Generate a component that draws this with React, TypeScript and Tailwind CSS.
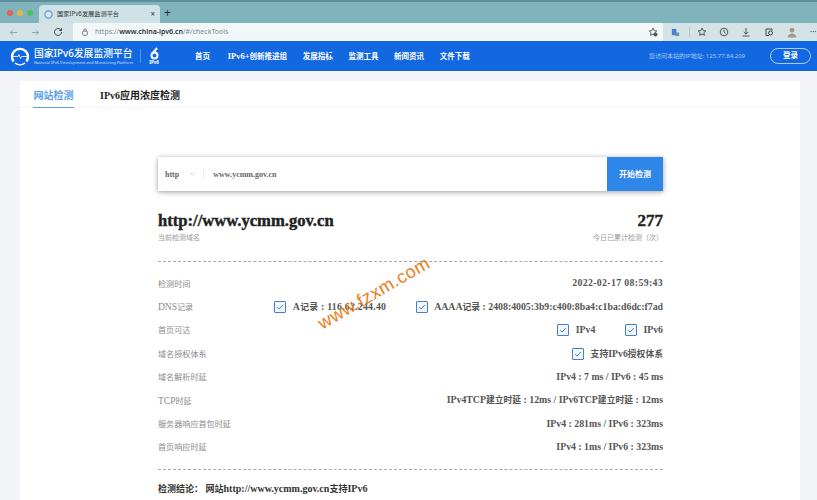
import React from "react";

const serif = "font-['Liberation_Serif','Noto_Sans_CJK_SC',serif]";
const sans = "font-['Noto_Sans','Noto_Sans_CJK_SC',sans-serif]";

function T({ text, cjk = "text-[8.8px]" }: { text: string; cjk?: string }) {
  return (
    <>
      {text.split(/([\u4e00-\u9fff\uff00-\uffef]+)/).map((part, i) =>
        i % 2 === 1 ? (
          <span key={i} className={cjk}>{part}</span>
        ) : (
          <span key={i}>{part}</span>
        )
      )}
    </>
  );
}

function Check() {
  return (
    <span className="flex h-[12px] w-[12px] shrink-0 items-center justify-center rounded-[1px] border border-[#3f7fd6] bg-[#f4f8fd]">
      <svg width="8" height="8" viewBox="0 0 8 8" fill="none" stroke="#3f7fd6" strokeWidth="1">
        <path d="M1.2 4.2 3.2 6 6.8 2" />
      </svg>
    </span>
  );
}

function Row({ label, children }: { label: string; children: React.ReactNode }) {
  return (
    <div className="flex h-[23.4px] items-center justify-between">
      <span className={`text-[9.5px] text-[#8a8a8a] ${serif}`}><T text={label} cjk="text-[8.1px]" /></span>
      <div className={`flex items-center whitespace-pre text-[9.8px] font-bold text-[#555] ${serif}`}>{children}</div>
    </div>
  );
}

function Browser() {
  return (
    <div className="shrink-0">
      <div className="flex h-[23px] items-end border-t-2 border-[#5f8f9c] bg-[#7fb4bc]">
        <div className="flex h-full w-[39px] items-center gap-[4px] pl-[7px]">
          <span className="h-[6px] w-[6px] rounded-full bg-[#e8605a]" />
          <span className="h-[6px] w-[6px] rounded-full bg-[#e3b93f]" />
          <span className="h-[6px] w-[6px] rounded-full bg-[#4fbf63]" />
        </div>
        <div className="flex h-[18px] w-[121px] items-center rounded-t-[4px] bg-[#cfe2e5] pl-[5px] pr-[5px]">
          <svg width="9" height="9" viewBox="0 0 10 10" fill="#dbe8f5" stroke="#5a8fd8" strokeWidth="1.2">
            <circle cx="5" cy="5" r="4" />
          </svg>
          <span className={`ml-[4px] text-[6.2px] text-[#333] ${sans}`}>国家IPv6发展监测平台</span>
          <span className={`ml-auto text-[8px] leading-none text-[#333] ${sans}`}>×</span>
        </div>
        <span className="mb-[4px] ml-[4px] text-[12px] leading-none text-[#234]">+</span>
      </div>
      <div className="flex h-[18px] items-center bg-[#d3e3e6]">
        <div className="flex w-[73px] items-center gap-[13px] pl-[9px] text-[#8aa3a8]">
          <svg width="9" height="9" viewBox="0 0 10 10" fill="none" stroke="currentColor" strokeWidth="1"><path d="M9 5H1.5M4.5 2 1.5 5l3 3" /></svg>
          <svg width="9" height="9" viewBox="0 0 10 10" fill="none" stroke="currentColor" strokeWidth="1"><path d="M1 5h7.5M5.5 2l3 3-3 3" /></svg>
          <svg width="10" height="10" viewBox="0 0 10 10" fill="none" stroke="#3a4a50" strokeWidth="1"><path d="M8.5 5a3.5 3.5 0 1 1-1-2.5L8.5 3.5M8.5 1.2v2.3H6.2" /></svg>
        </div>
        <div className={`flex h-full w-[590px] items-center bg-[#f2f7f8] pl-[8px] text-[7px] text-[#7d8a8e] ${sans}`}>
          <svg width="8" height="8" viewBox="0 0 10 10" fill="none" stroke="#667" strokeWidth="1"><rect x="2" y="4" width="6" height="5" rx="1" /><path d="M3.5 4V2.5a1.5 1.5 0 0 1 3 0V4" /></svg>
          <span className="ml-[6px]">https://<b className="font-semibold text-[#2a3336]">www.china-ipv6.cn</b>/#/checkTools</span>
          <svg className="ml-auto mr-[5px]" width="10" height="10" viewBox="0 0 10 10" fill="none" stroke="#444" strokeWidth=".8"><path d="M5 1l1.2 2.6 2.6.3-1.9 1.8.5 2.6L5 7 2.6 8.3l.5-2.6L1.2 3.9l2.6-.3z" /><circle cx="7.5" cy="7.5" r="1.6" fill="#555" /></svg>
        </div>
        <div className="flex flex-1 items-center pl-[8px]">
          <svg width="9" height="9" viewBox="0 0 10 10"><rect x="1" y="1" width="5" height="7" fill="#4a7fd8" /><rect x="5" y="5" width="4" height="4" fill="#6a8fb8" /></svg>
          <span className="ml-[9px] h-[10px] w-px bg-[#b5c9cc]" />
          <svg className="ml-[7px]" width="10" height="10" viewBox="0 0 10 10" fill="none" stroke="#333" strokeWidth=".8"><path d="M5 1l1.2 2.6 2.6.3-1.9 1.8.5 2.6L5 7 2.6 8.3l.5-2.6L1.2 3.9l2.6-.3z" /></svg>
          <svg className="ml-[12px]" width="10" height="10" viewBox="0 0 10 10" fill="none" stroke="#333" strokeWidth=".8"><circle cx="5" cy="5" r="3.8" /><path d="M5 2.8V5l1.5 1" /></svg>
          <svg className="ml-[12px]" width="10" height="10" viewBox="0 0 10 10" fill="none" stroke="#333" strokeWidth=".8"><path d="M5 1v6M2.8 5 5 7.2 7.2 5M1.5 9h7" /></svg>
          <svg className="ml-[13px]" width="10" height="10" viewBox="0 0 10 10" fill="none" stroke="#333" strokeWidth=".9"><path d="M8 3.5V2H2v6.5h3" /><circle cx="6.5" cy="6" r="2" /></svg>
          <svg className="ml-[13px]" width="10" height="11" viewBox="0 0 10 11" fill="#a39a86"><circle cx="5" cy="3.2" r="2.4" /><path d="M0.8 10.5c0-3 2-4 4.2-4s4.2 1 4.2 4z" /></svg>
          <span className="ml-[13px] text-[8px] leading-none text-[#445]">···</span>
        </div>
      </div>
    </div>
  );
}

function Header() {
  const nav = ["首页", "IPv6+创新推进组", "发展指标", "监测工具", "新闻资讯", "文件下载"];
  return (
    <div className="flex h-[30px] shrink-0 items-center bg-[#1268e0] text-white">
      <svg className="ml-[10px]" width="20" height="20" viewBox="0 0 20 20" fill="none" stroke="white" strokeWidth="2.4">
        <path d="M3.5 15.5a8 8 0 1 1 13 0" />
        <path d="M1 10.5h7l1-2 1.5 4 1-2H19" strokeWidth=".8" />
        <path d="M5 17a8 8 0 0 0 10 0" strokeWidth="1.4" />
      </svg>
      <div className={`ml-[4px] flex w-[99px] flex-col ${sans}`}>
        <span className="whitespace-nowrap text-[9.8px] font-medium leading-[12px]">国家IPv6发展监测平台</span>
        <span className="whitespace-nowrap text-[4px] leading-[5px] text-[#cfe0fa]">National IPv6 Development and Monitoring Platform</span>
      </div>
      <span className="ml-[7px] h-[14px] w-px bg-[#5a97ea]" />
      <div className={`ml-[7px] flex w-[12px] flex-col items-center ${sans}`}>
        <svg width="11" height="13" viewBox="0 0 11 13" fill="none" stroke="white" strokeWidth="2"><path d="M8 1 3.5 6.5" /><circle cx="5.5" cy="8.5" r="3" /></svg>
        <span className="text-[4.5px] font-bold leading-[5px]">IPv6</span>
      </div>
      <nav className={`ml-[35px] flex gap-[15.7px] text-[8.5px] font-bold ${serif}`}>
        {nav.map((n, i) => (
          <span key={n} className={i === 0 ? "mr-[2px]" : ""}><T text={n} cjk="text-[7.5px]" /></span>
        ))}
      </nav>
      <span className={`ml-auto text-[6px] text-[#a9c8f4] ${sans}`}>您访问本站的IP地址: 125.77.84.209</span>
      <span className={`ml-[25px] mr-[6px] flex h-[16px] w-[41px] items-center justify-center rounded-full border border-[#a9c8f4] text-[7.5px] font-bold ${serif}`}>登录</span>
    </div>
  );
}

export default function App() {
  return (
    <div className="relative flex h-[500px] w-[817px] flex-col overflow-hidden bg-[#f3f4f8]">
      <Browser />
      <Header />
      <main className="mx-[20px] mt-[10px] w-[780px] flex-1 bg-white">
        <div className={`flex h-[27px] gap-[26px] border-b border-[#f2f3f6] pl-[13px] text-[10px] font-bold ${serif}`}>
          <span className="flex h-[27px] w-[41px] items-center justify-center whitespace-nowrap border-b border-[#5a9fe6] pt-[2px] text-[#5a9fe6]">网站检测</span>
          <span className="flex h-[27px] items-center pt-[2px] text-[#222]">IPv6应用浓度检测</span>
        </div>
        <div className="ml-[138px] w-[505px] pt-[49px]">
          <div className="flex h-[34px] items-center bg-white shadow-[0_1px_5px_rgba(0,0,0,0.4)]">
            <span className={`ml-[7px] pt-[1px] text-[8px] font-bold text-[#666] ${serif}`}>http</span>
            <svg className="ml-[10px]" width="7" height="4" viewBox="0 0 7 4" fill="none" stroke="#bbb" strokeWidth=".7"><path d="M.8.5 3.5 3 6.2.5" /></svg>
            <span className="ml-[7px] h-[14px] w-px bg-[#f0f0f0]" />
            <span className={`ml-[9px] pt-[1px] text-[8px] font-bold text-[#666] ${serif}`}>www.ycmm.gov.cn</span>
            <span className={`ml-auto flex h-full w-[56px] items-center justify-center bg-[#2e86e8] pt-[1px] text-[8px] font-bold text-white ${serif}`}>开始检测</span>
          </div>
          <div className="mt-[20px] flex justify-between">
            <div>
              <div className={`text-[16.6px] font-bold leading-[20px] text-[#222] [-webkit-text-stroke:0.4px_#222] ${serif}`}>http://www.ycmm.gov.cn</div>
              <div className={`mt-[2px] text-[7px] leading-[10px] text-[#999] ${serif}`}>当前检测域名</div>
            </div>
            <div className="text-right">
              <div className={`text-[17px] font-bold leading-[20px] text-[#222] [-webkit-text-stroke:0.4px_#222] ${serif}`}>277</div>
              <div className={`mt-[2px] text-[7px] leading-[10px] text-[#999] ${serif}`}>今日已累计检测（次）</div>
            </div>
          </div>
          <div className="mt-[18px] border-t border-dashed border-[#aaa]" />
          <div className="pt-[10px]">
            <Row label="检测时间"><span className="tracking-[0.35px]">2022-02-17 08:59:43</span></Row>
            <Row label="DNS记录">
              <Check /><span className="ml-[7px] tracking-[0.25px]"><T text="A记录 : 116.62.244.40" /></span>
              <span className="ml-[30px]"><Check /></span><span className="ml-[6px]"><T text="AAAA记录 : 2408:4005:3b9:c400:8ba4:c1ba:d6dc:f7ad" /></span>
            </Row>
            <Row label="首页可达">
              <Check /><span className="ml-[7px]">IPv4</span>
              <span className="ml-[30px]"><Check /></span><span className="ml-[6px]">IPv6</span>
            </Row>
            <Row label="域名授权体系">
              <Check /><span className="ml-[7px]"><T text="支持IPv6授权体系" /></span>
            </Row>
            <Row label="域名解析时延">IPv4 : 7 ms / IPv6 : 45 ms</Row>
            <Row label="TCP时延"><T text="IPv4TCP建立时延 : 12ms / IPv6TCP建立时延 : 12ms" /></Row>
            <Row label="服务器响应首包时延">IPv4 : 281ms / IPv6 : 323ms</Row>
            <Row label="首页响应时延">IPv4 : 1ms / IPv6 : 323ms</Row>
          </div>
          <div className="mt-[10px] border-t border-dashed border-[#aaa]" />
          <div className={`mt-[11px] text-[10px] font-bold text-[#333] ${serif}`}><T text="检测结论： 网站http://www.ycmm.gov.cn支持IPv6" cjk="text-[9px]" /></div>
        </div>
      </main>
      <div className="absolute left-[311px] top-[280px] -rotate-[30deg] font-['Liberation_Sans',sans-serif] text-[18px] tracking-[0.5px] text-[#e8811a]">www.fzxm.com</div>
    </div>
  );
}
